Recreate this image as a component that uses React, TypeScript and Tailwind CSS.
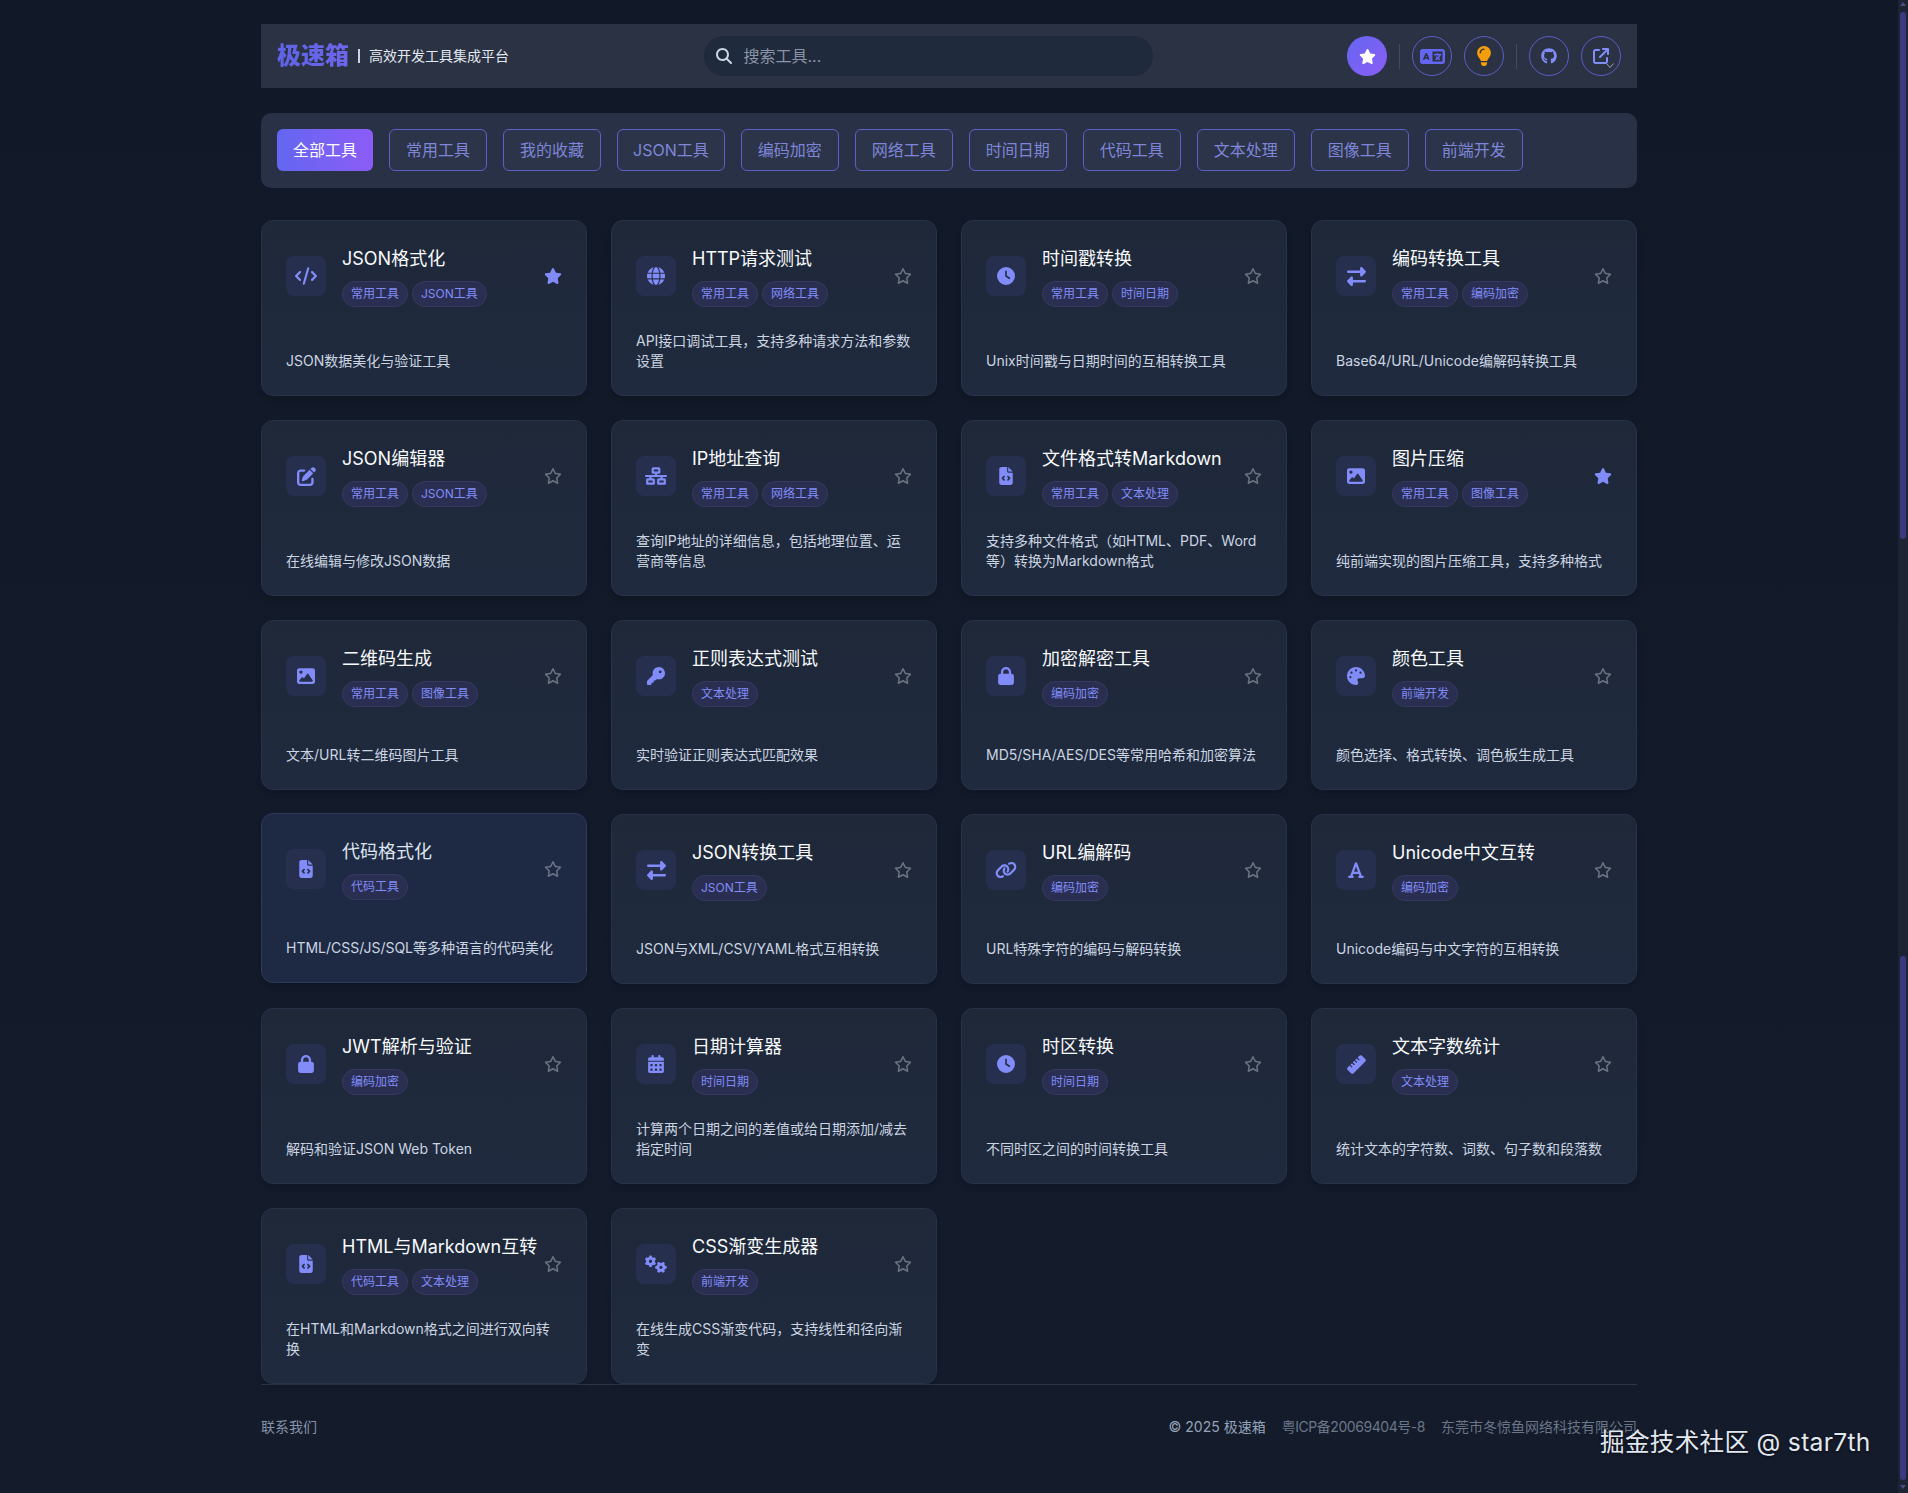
import React from 'react';
import { IconType } from 'react-icons';
import {
  FaArrowUpRightFromSquare,
  FaCalendarDays,
  FaClock,
  FaCode,
  FaFileCode,
  FaFont,
  FaGears,
  FaGithub,
  FaGlobe,
  FaImage,
  FaKey,
  FaLanguage,
  FaLightbulb,
  FaLink,
  FaLock,
  FaMagnifyingGlass,
  FaNetworkWired,
  FaPalette,
  FaPenToSquare,
  FaRegStar,
  FaRightLeft,
  FaRuler,
  FaStar,
} from 'react-icons/fa6';

interface Tool {
  title: string;
  tags: string[];
  desc: string;
  icon: IconType;
  iconSize?: number;
  starred?: boolean;
  hovered?: boolean;
}

const filters = ['常用工具', '我的收藏', 'JSON工具', '编码加密', '网络工具', '时间日期', '代码工具', '文本处理', '图像工具', '前端开发'];

const tools: Tool[] = [
  { title: 'JSON格式化', tags: ['常用工具', 'JSON工具'], desc: 'JSON数据美化与验证工具', icon: FaCode, iconSize: 22, starred: true },
  { title: 'HTTP请求测试', tags: ['常用工具', '网络工具'], desc: 'API接口调试工具，支持多种请求方法和参数设置', icon: FaGlobe },
  { title: '时间戳转换', tags: ['常用工具', '时间日期'], desc: 'Unix时间戳与日期时间的互相转换工具', icon: FaClock },
  { title: '编码转换工具', tags: ['常用工具', '编码加密'], desc: 'Base64/URL/Unicode编解码转换工具', icon: FaRightLeft, iconSize: 19 },
  { title: 'JSON编辑器', tags: ['常用工具', 'JSON工具'], desc: '在线编辑与修改JSON数据', icon: FaPenToSquare, iconSize: 19 },
  { title: 'IP地址查询', tags: ['常用工具', '网络工具'], desc: '查询IP地址的详细信息，包括地理位置、运营商等信息', icon: FaNetworkWired, iconSize: 22 },
  { title: '文件格式转Markdown', tags: ['常用工具', '文本处理'], desc: '支持多种文件格式（如HTML、PDF、Word等）转换为Markdown格式', icon: FaFileCode },
  { title: '图片压缩', tags: ['常用工具', '图像工具'], desc: '纯前端实现的图片压缩工具，支持多种格式', icon: FaImage, starred: true },
  { title: '二维码生成', tags: ['常用工具', '图像工具'], desc: '文本/URL转二维码图片工具', icon: FaImage },
  { title: '正则表达式测试', tags: ['文本处理'], desc: '实时验证正则表达式匹配效果', icon: FaKey },
  { title: '加密解密工具', tags: ['编码加密'], desc: 'MD5/SHA/AES/DES等常用哈希和加密算法', icon: FaLock },
  { title: '颜色工具', tags: ['前端开发'], desc: '颜色选择、格式转换、调色板生成工具', icon: FaPalette },
  { title: '代码格式化', tags: ['代码工具'], desc: 'HTML/CSS/JS/SQL等多种语言的代码美化', icon: FaFileCode, hovered: true },
  { title: 'JSON转换工具', tags: ['JSON工具'], desc: 'JSON与XML/CSV/YAML格式互相转换', icon: FaRightLeft, iconSize: 19 },
  { title: 'URL编解码', tags: ['编码加密'], desc: 'URL特殊字符的编码与解码转换', icon: FaLink, iconSize: 22 },
  { title: 'Unicode中文互转', tags: ['编码加密'], desc: 'Unicode编码与中文字符的互相转换', icon: FaFont },
  { title: 'JWT解析与验证', tags: ['编码加密'], desc: '解码和验证JSON Web Token', icon: FaLock },
  { title: '日期计算器', tags: ['时间日期'], desc: '计算两个日期之间的差值或给日期添加/减去指定时间', icon: FaCalendarDays },
  { title: '时区转换', tags: ['时间日期'], desc: '不同时区之间的时间转换工具', icon: FaClock },
  { title: '文本字数统计', tags: ['文本处理'], desc: '统计文本的字符数、词数、句子数和段落数', icon: FaRuler, iconSize: 19 },
  { title: 'HTML与Markdown互转', tags: ['代码工具', '文本处理'], desc: '在HTML和Markdown格式之间进行双向转换', icon: FaFileCode },
  { title: 'CSS渐变生成器', tags: ['前端开发'], desc: '在线生成CSS渐变代码，支持线性和径向渐变', icon: FaGears, iconSize: 22 },
];

const RoundButton: React.FC<{ children: React.ReactNode; active?: boolean }> = ({ children, active }) => (
  <button
    className={
      active
        ? 'relative flex h-10 w-10 items-center justify-center rounded-full bg-gradient-to-br from-[#6366f1] to-[#8b5cf6] text-white'
        : 'relative flex h-10 w-10 items-center justify-center rounded-full border border-[#5b5fc7] text-[#818cf8]'
    }
  >
    {children}
  </button>
);

const ToolCard: React.FC<{ tool: Tool }> = ({ tool }) => {
  const Icon = tool.icon;
  return (
    <div
      className={
        tool.hovered
          ? 'flex min-h-[170px] -translate-y-px flex-col rounded-xl border border-[#2c3a5c] bg-[#1e2a44] p-6 shadow-md'
          : 'flex min-h-[170px] flex-col rounded-xl border border-[#283248] bg-gradient-to-b from-[#1e2839] to-[#1f2a3e] p-6 shadow-md'
      }
    >
      <div className="mb-6 flex items-center">
        <div className="mr-4 flex h-10 w-10 shrink-0 items-center justify-center rounded-lg bg-[#272f4e] text-[#818cf8]">
          <Icon size={tool.iconSize ?? 18} />
        </div>
        <div className="min-w-0 flex-1">
          <h3 className={tool.hovered ? 'mb-2 whitespace-nowrap text-lg leading-7 text-[#dde3ec]' : 'mb-2 whitespace-nowrap text-lg leading-7 text-[#f8fafc]'}>
            {tool.title}
          </h3>
          <div className="flex gap-1">
            {tool.tags.map((tag) => (
              <span key={tag} className="rounded-full border border-[#35395f] bg-[#2a2f52] px-2 py-1 text-xs leading-4 text-[#818cf8]">
                {tag}
              </span>
            ))}
          </div>
        </div>
        {tool.starred ? (
          <FaStar size={18} className="shrink-0 text-[#818cf8]" />
        ) : (
          <FaRegStar size={18} className="shrink-0 text-[#6b7280]" />
        )}
      </div>
      <p className="mt-auto text-sm leading-5 text-[#cbd5e1]">{tool.desc}</p>
    </div>
  );
};

export default function App() {
  return (
    <div className="relative flex h-[1493px] overflow-hidden bg-gradient-to-b from-[#111827] to-[#141b2b] font-['Inter','Noto_Sans_CJK_SC',sans-serif]">
      <main className="min-w-0 flex-1">
        <div className="mx-auto w-[1376px] pt-6">
          <header className="flex h-16 items-center justify-between bg-[#2a3244] px-4">
            <div className="flex items-center">
              <span className="bg-gradient-to-r from-[#5f63e6] to-[#6d66ea] bg-clip-text text-2xl font-black text-transparent">极速箱</span>
              <span className="ml-[9px] h-[14px] w-[2px] bg-[#cbd5e1]" />
              <span className="ml-[9px] text-sm text-[#e2e8f0]">高效开发工具集成平台</span>
            </div>
            <div className="flex h-10 w-[449px] items-center gap-3 rounded-[20px] bg-[#1f2a3c] px-3">
              <FaMagnifyingGlass size={16} className="shrink-0 text-[#cbd5e1]" />
              <input placeholder="搜索工具..." className="min-w-0 flex-1 bg-transparent text-base text-white outline-none placeholder:text-[#8a94a6]" />
            </div>
            <div className="flex items-center gap-3">
              <RoundButton active>
                <FaStar size={17} />
              </RoundButton>
              <span className="h-[25px] w-px bg-[#414b62]" />
              <RoundButton>
                <FaLanguage size={25} className="text-[#6366f1]" />
              </RoundButton>
              <RoundButton>
                <FaLightbulb size={20} className="text-[#f59e0b]" />
              </RoundButton>
              <span className="h-[25px] w-px bg-[#414b62]" />
              <RoundButton>
                <FaGithub size={16} />
              </RoundButton>
              <RoundButton>
                <FaArrowUpRightFromSquare size={16} />
                <svg viewBox="0 0 8 5" className="absolute right-[6px] bottom-[7px] h-[5px] w-2 fill-none stroke-[#9aa3b5]">
                  <polyline points="0.5,0.5 4,4.5 7.5,0.5" />
                </svg>
              </RoundButton>
            </div>
          </header>

          <nav className="mt-[25px] flex h-[75px] items-start gap-4 rounded-[10px] bg-[#283145] px-4 pt-4">
            <button className="h-[42px] rounded-md bg-gradient-to-r from-[#6366f1] to-[#8b5cf6] px-4 text-base text-white">全部工具</button>
            {filters.map((name) => (
              <button
                key={name}
                className={
                  name === 'JSON工具'
                    ? 'h-[42px] rounded-md border border-[#5b5fc7] bg-[#2b3448] px-[15px] text-base text-[#7f86d9]'
                    : 'h-[42px] rounded-md border border-[#5b5fc7] bg-[#2b3448] px-4 text-base text-[#7f86d9]'
                }
              >
                {name}
              </button>
            ))}
          </nav>

          <div className="mt-8 grid grid-cols-4 gap-6">
            {tools.map((tool) => (
              <ToolCard key={tool.title} tool={tool} />
            ))}
          </div>

          <footer className="flex items-center justify-between border-t border-[#2d3548] pt-8 text-sm leading-5">
            <span className="text-[#8592a6]">联系我们</span>
            <div className="flex gap-4">
              <span className="text-[#94a3b8]">© 2025 极速箱</span>
              <span className="tracking-[-0.45px] text-[#6b7688]">粤ICP备20069404号-8</span>
              <span className="text-[#6b7688]">东莞市冬惊鱼网络科技有限公司</span>
            </div>
          </footer>
        </div>
      </main>

      <aside className="flex w-[10px] shrink-0 flex-col items-center bg-[#1e2433]">
        <span className="mt-[2px] mb-[6px] h-0 w-0 border-x-[3px] border-b-[4px] border-x-transparent border-b-[#4a4a8a]" />
        <div className="h-[527px] w-[6px] rounded-full bg-[#3b3a80]" />
        <div className="flex-1" />
        <div className="h-[524px] w-[6px] rounded-full bg-[#3b3a80]" />
        <span className="mt-[5px] mb-[4px] h-0 w-0 border-x-[3px] border-t-[4px] border-x-transparent border-t-[#4a4a8a]" />
      </aside>

      <span className="absolute top-[1427px] left-[1600px] text-[24.6px] leading-[30px] tracking-[0.3px] whitespace-nowrap text-[#e2e8f0] [text-shadow:0_1px_3px_rgba(0,0,0,0.6)]">
        掘金技术社区 @ star7th
      </span>
    </div>
  );
}
